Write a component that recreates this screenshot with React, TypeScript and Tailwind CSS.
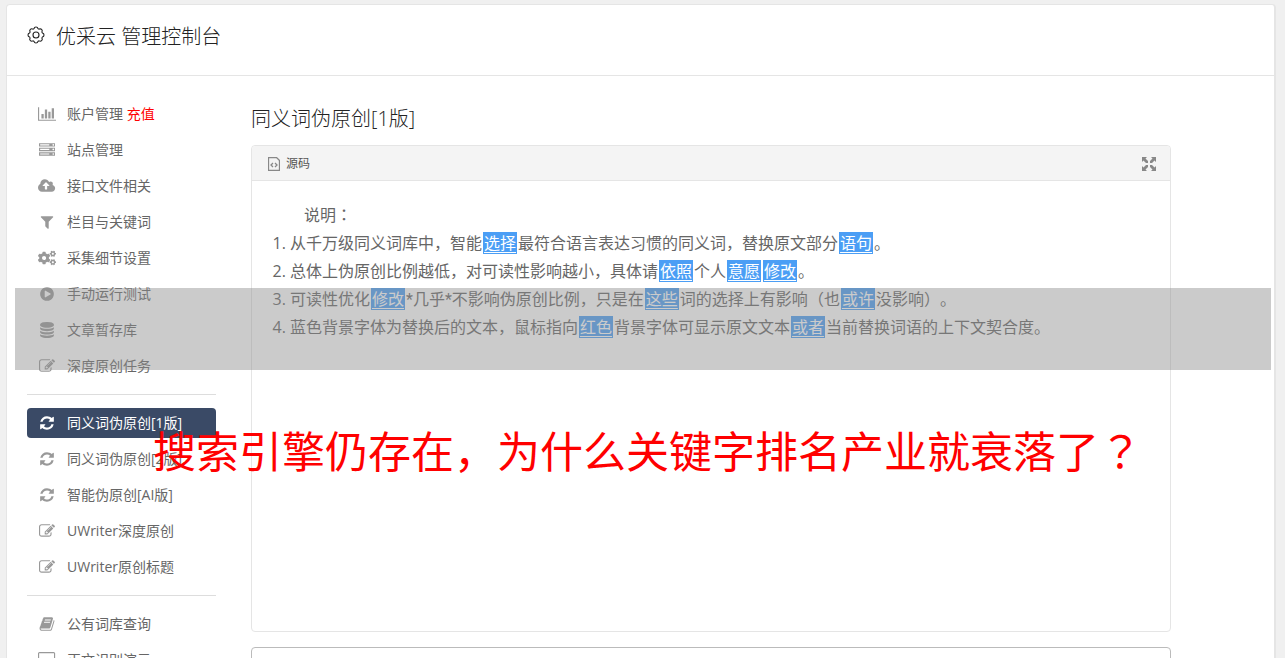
import type { ReactNode } from 'react';
import { FaCogs } from 'react-icons/fa';

interface IconProps {
  width?: number;
  d: string;
}

// Font Awesome 4 glyphs share a 1792 unit em, only the width differs
function Glyph({ width = 1792, d }: IconProps) {
  return (
    <svg viewBox={`0 0 ${width} 1792`} className="h-4 w-auto" fill="currentColor" aria-hidden="true">
      <path d={d} />
    </svg>
  );
}

const icons = {
  chart: 'M640 896v512h-256v-512h256zm384-512v1024h-256v-1024h256zm1024 1152v128h-2048v-1536h128v1408h1920zm-640-896v768h-256v-768h256zm384-384v1152h-256v-1152h256z',
  server: 'M128 1408h1024v-128h-1024v128zm0-512h1024v-128h-1024v128zm1568 448q0-40-28-68t-68-28-68 28-28 68 28 68 68 28 68-28 28-68zm-1568-960h1024v-128h-1024v128zm1568 448q0-40-28-68t-68-28-68 28-28 68 28 68 68 28 68-28 28-68zm0-512q0-40-28-68t-68-28-68 28-28 68 28 68 68 28 68-28 28-68zm96 832v384h-1792v-384h1792zm0-512v384h-1792v-384h1792zm0-512v384h-1792v-384h1792z',
  cloud: 'M1280 864q0-14-9-23l-352-352q-9-9-23-9t-23 9l-351 351q-10 12-10 24 0 14 9 23t23 9h224v352q0 13 9.5 22.5t22.5 9.5h192q13 0 22.5-9.5t9.5-22.5v-352h224q13 0 22.5-9.5t9.5-22.5zm640 288q0 159-112.5 271.5t-271.5 112.5h-1088q-185 0-316.5-131.5t-131.5-316.5q0-130 70-240t188-165q-2-30-2-43 0-212 150-362t362-150q156 0 285.5 87t188.5 231q71-62 166-62 106 0 181 75t75 181q0 76-41 138 130 31 213.5 135.5t83.5 238.5z',
  filter: 'M1595 295q17 41-14 70l-493 493v742q0 42-39 59-13 5-25 5-27 0-45-19l-256-256q-19-19-19-45v-486l-493-493q-31-29-14-70 17-39 59-39h1280q42 0 59 39z',
  play: 'M896 128q209 0 385.5 103t279.5 279.5 103 385.5-103 385.5-279.5 279.5-385.5 103-385.5-103-279.5-279.5-103-385.5 103-385.5 279.5-279.5 385.5-103zm384 823q32-18 32-55t-32-55l-544-320q-31-19-64-1-32 19-32 56v640q0 37 32 56 16 8 32 8 17 0 32-9z',
  database: 'M896 768q237 0 443-43t325-127v170q0 69-103 128t-280 93.5-385 34.5-385-34.5-280-93.5-103-128v-170q119 84 325 127t443 43zm0 768q237 0 443-43t325-127v170q0 69-103 128t-280 93.5-385 34.5-385-34.5-280-93.5-103-128v-170q119 84 325 127t443 43zm0-384q237 0 443-43t325-127v170q0 69-103 128t-280 93.5-385 34.5-385-34.5-280-93.5-103-128v-170q119 84 325 127t443 43zm0-1152q208 0 385 34.5t280 93.5 103 128v128q0 69-103 128t-280 93.5-385 34.5-385-34.5-280-93.5-103-128v-128q0-69 103-128t280-93.5 385-34.5z',
  edit: 'M888 1184l116-116-152-152-116 116v56h96v96h56zm440-720q-16-16-33 1l-350 350q-17 17-1 33t33-1l350-350q17-17 1-33zm80 594v190q0 119-84.5 203.5t-203.5 84.5h-832q-119 0-203.5-84.5t-84.5-203.5v-832q0-119 84.5-203.5t203.5-84.5h832q63 0 117 25 15 7 18 23 3 17-9 29l-49 49q-14 14-32 8-23-6-45-6h-832q-66 0-113 47t-47 113v832q0 66 47 113t113 47h832q66 0 113-47t47-113v-126q0-13 9-22l64-64q15-15 35-7t20 29zm-96-738l288 288-672 672h-288v-288zm444 132l-92 92-288-288 92-92q28-28 68-28t68 28l152 152q28 28 28 68t-28 68z',
  refresh: 'M1639 1056q0 5-1 7-64 268-268 434.5t-478 166.5q-146 0-282.5-55t-243.5-157l-129 129q-19 19-45 19t-45-19-19-45v-448q0-26 19-45t45-19h448q26 0 45 19t19 45-19 45l-137 137q71 66 161 102t187 36q134 0 250-65t186-179q11-17 53-117 8-23 30-23h192q13 0 22.5 9.5t9.5 22.5zm25-800v448q0 26-19 45t-45 19h-448q-26 0-45-19t-19-45 19-45l138-138q-148-137-349-137-134 0-250 65t-186 179q-11 17-53 117-8 23-30 23h-199q-13 0-22.5-9.5t-9.5-22.5v-7q65-268 270-434.5t480-166.5q146 0 284 55.5t245 156.5l130-129q19-19 45-19t45 19 19 45z',
  book: 'M1703 478q40 57 18 129l-275 906q-19 64-76.5 107.5t-122.5 43.5h-923q-77 0-148.5-53.5t-99.5-131.5q-24-67-2-127 0-4 3-27t4-37q1-8-3-21.5t-3-19.5q2-11 8-21t16.5-23.5 16.5-23.5q23-38 45-91.5t30-91.5q3-10 .5-30t-.5-28q3-11 17-28t17-23q21-36 42-92t25-90q1-9-2.5-32t.5-28q4-13 22-30.5t22-22.5q19-26 42.5-84.5t27.5-96.5q1-8-3-25.5t-2-26.5q2-8 9-18t18-23 17-21q8-12 16.5-30.5t15-35 16-36 19.5-32 26.5-23.5 36-11.5 47.5 5.5l-1 3q38-9 51-9h761q74 0 114 56t18 130l-274 906q-36 119-71.5 153.5t-128.5 34.5h-869q-27 0-38 15-11 16-1 43 24 70 144 70h923q29 0 56-15.5t35-41.5l300-987q7-22 5-57 38 15 59 43zm-1064 2q-4 13 2 22.5t20 9.5h608q13 0 25.5-9.5t16.5-22.5l21-64q4-13-2-22.5t-20-9.5h-608q-13 0-25.5 9.5t-16.5 22.5zm-83 256q-4 13 2 22.5t20 9.5h608q13 0 25.5-9.5t16.5-22.5l21-64q4-13-2-22.5t-20-9.5h-608q-13 0-25.5 9.5t-16.5 22.5z',
  desktop: 'M1792 992v-832q0-13-9.5-22.5t-22.5-9.5h-1600q-13 0-22.5 9.5t-9.5 22.5v832q0 13 9.5 22.5t22.5 9.5h1600q13 0 22.5-9.5t9.5-22.5zm128-832v1088q0 66-47 113t-113 47h-544q0 37 16 77.5t32 71 16 43.5q0 26-19 45t-45 19h-512q-26 0-45-19t-19-45q0-14 16-44t32-70 16-78h-544q-66 0-113-47t-47-113v-1088q0-66 47-113t113-47h1600q66 0 113 47t47 113z',
};

interface NavItemProps {
  icon: ReactNode;
  active?: boolean;
  children: ReactNode;
}

function NavItem({ icon, active, children }: NavItemProps) {
  return (
    <li>
      <a
        href="#"
        aria-current={active ? 'page' : undefined}
        className={`flex h-[30px] items-center rounded text-sm whitespace-nowrap ${
          active ? 'bg-[#3a4a66] text-white' : 'text-[#666] hover:bg-gray-100'
        }`}
      >
        <span className={`flex w-10 justify-center ${active ? 'text-white' : 'text-[#999]'}`}>{icon}</span>
        <span>{children}</span>
      </a>
    </li>
  );
}

function Divider() {
  return <li role="separator" className="my-[7px] border-t border-[#ddd]" />;
}

// Replaced word inside the rewritten text
function Word({ children }: { children: ReactNode }) {
  return (
    <a href="#" className="mx-px bg-[#4b9ef5] px-px leading-5 text-white underline underline-offset-3">
      {children}
    </a>
  );
}

// Full-width punctuation centred in its cell
function Mark({ children }: { children: ReactNode }) {
  return <span className="font-['Noto_Sans_CJK_TC',sans-serif] leading-none">{children}</span>;
}

function GearIcon() {
  return (
    <svg viewBox="1 1 18 18" className="size-[18px]" fill="none" stroke="currentColor" strokeWidth="1.1" aria-hidden="true">
      <path d="M8 3.6A2.05 2.05 0 0 1 12 3.6A1.9 1.9 0 0 0 13.2 4.1A2.05 2.05 0 0 1 15.95 6.9A1.9 1.9 0 0 0 16.4 8A2.05 2.05 0 0 1 16.4 12A1.9 1.9 0 0 0 15.95 13.1A2.05 2.05 0 0 1 13.1 15.9A1.9 1.9 0 0 0 12 16.4A2.05 2.05 0 0 1 8 16.4A1.9 1.9 0 0 0 6.9 15.9A2.05 2.05 0 0 1 4.05 13.1A1.9 1.9 0 0 0 3.6 12A2.05 2.05 0 0 1 3.6 8A1.9 1.9 0 0 0 4.05 6.9A2.05 2.05 0 0 1 6.9 4.1A1.9 1.9 0 0 0 8 3.6Z" />
      <circle cx="10" cy="10" r="3" />
    </svg>
  );
}

function SourceIcon() {
  return (
    <svg viewBox="0 0 12 14" className="h-3.5 w-3" fill="none" stroke="#888" aria-hidden="true">
      <path d="M.5.5h8l3 3v10h-11z" strokeWidth="1.3" />
      <path d="M5 6L3 8l2 2M7 6l2 2-2 2" strokeWidth="1.3" />
    </svg>
  );
}

function MaximizeIcon() {
  return (
    <svg viewBox="0 0 14 14" className="size-3.5" fill="#888" aria-hidden="true">
      <path d="M0 0h5L3.5 1.5 6 4v2H4L1.5 3.5 0 5zM14 0v5l-1.5-1.5L10 6H8V4l2.5-2.5L9 0zM0 14V9l1.5 1.5L4 8h2v2l-2.5 2.5L5 14zM14 14H9l1.5-1.5L8 10V8h2l2.5 2.5L14 9z" />
    </svg>
  );
}

export default function App() {
  return (
    <div className="relative h-screen overflow-hidden bg-[#f0f0f0] pt-1 pr-[9px] pl-1.5 font-['Open_Sans','Noto_Sans_CJK_SC',sans-serif] [text-spacing-trim:space-all]">
      <div className="min-h-full rounded border border-r-2 border-[#e5e5e5] bg-white">
        <header className="flex h-[71px] items-start gap-[11px] border-b border-[#e5e5e5] px-5 pt-[17px] text-[#222]">
          <span className="pt-1">
            <GearIcon />
          </span>
          <h1 className="text-xl leading-[30px] font-light">优采云 管理控制台</h1>
        </header>

        <div className="flex gap-[35px] pr-[103px] pl-5">
          <nav className="w-[189px] shrink-0 pt-[23px]" aria-label="管理">
            <ul className="flex flex-col gap-1.5">
              <NavItem icon={<Glyph width={2048} d={icons.chart} />}>
                账户管理 <span className="text-[#f00]">充值</span>
              </NavItem>
              <NavItem icon={<Glyph d={icons.server} />}>站点管理</NavItem>
              <NavItem icon={<Glyph width={1920} d={icons.cloud} />}>接口文件相关</NavItem>
              <NavItem icon={<Glyph d={icons.filter} />}>栏目与关键词</NavItem>
              <NavItem icon={<FaCogs size={18} />}>采集细节设置</NavItem>
              <NavItem icon={<Glyph d={icons.play} />}>手动运行测试</NavItem>
              <NavItem icon={<Glyph d={icons.database} />}>文章暂存库</NavItem>
              <NavItem icon={<Glyph d={icons.edit} />}>深度原创任务</NavItem>
              <Divider />
              <NavItem icon={<Glyph d={icons.refresh} />} active>同义词伪原创[1版]</NavItem>
              <NavItem icon={<Glyph d={icons.refresh} />}>同义词伪原创[2版]</NavItem>
              <NavItem icon={<Glyph d={icons.refresh} />}>智能伪原创[AI版]</NavItem>
              <NavItem icon={<Glyph d={icons.edit} />}>UWriter深度原创</NavItem>
              <NavItem icon={<Glyph d={icons.edit} />}>UWriter原创标题</NavItem>
              <Divider />
              <NavItem icon={<Glyph d={icons.book} />}>公有词库查询</NavItem>
              <NavItem icon={<Glyph width={1920} d={icons.desktop} />}>正文识别演示</NavItem>
            </ul>
          </nav>

          <main className="min-w-0 flex-1 pt-7">
            <h2 className="text-xl leading-[30px] font-light text-[#222]">同义词伪原创[1版]</h2>

            <section className="mt-[11px] rounded border border-[#e5e5e5]">
              <div className="flex h-[35px] items-center justify-between rounded-t border-b border-[#e5e5e5] bg-[#f4f4f4] px-3.5 pt-px">
                <button type="button" className="flex items-center gap-1.5 px-0.5 text-xs text-[#555]">
                  <SourceIcon />
                  源码
                </button>
                <button type="button" aria-label="最大化">
                  <MaximizeIcon />
                </button>
              </div>
              <div className="min-h-[450px] px-5 py-5 text-base leading-7 text-[#666]">
                <p className="indent-8">说明<Mark>：</Mark></p>
                <ol className="list-decimal pl-[18px]">
                  <li>
                    从千万级同义词库中，智能<Word>选择</Word>最符合语言表达习惯的同义词，替换原文部分<Word>语句</Word>。
                  </li>
                  <li>
                    总体上伪原创比例越低，对可读性影响越小，具体请<Word>依照</Word>个人<Word>意愿</Word><Word>修改</Word>。
                  </li>
                  <li>
                    可读性优化<Word>修改</Word>
                    <span className="font-['Roboto','Noto_Sans_CJK_SC',sans-serif] leading-none">*几乎*</span>
                    不影响伪原创比例，只是在<Word>这些</Word>词的选择上有影响<Mark>（</Mark>也<Word>或许</Word>没影响<Mark>）</Mark>。
                  </li>
                  <li>
                    蓝色背景字体为替换后的文本，鼠标指向<Word>红色</Word>背景字体可显示原文文本<Word>或者</Word>当前替换词语的上下文契合度。
                  </li>
                </ol>
              </div>
            </section>

            <textarea
              aria-label="原文"
              className="mt-[15px] block h-40 w-full resize-none rounded border border-[#bbb] bg-white p-3"
            />
          </main>
        </div>
      </div>

      {/* Caption laid over the console */}
      <div className="pointer-events-none absolute top-72 right-3.5 left-[15px] h-[82px] bg-[#8b8b8b]/45" />
      <p className="pointer-events-none absolute top-[420px] left-[153px] text-[43px] leading-[64px] whitespace-nowrap text-[#f00]">
        搜索引擎仍存在，为什么关键字排名产业就衰落了<Mark>？</Mark>
      </p>
    </div>
  );
}
